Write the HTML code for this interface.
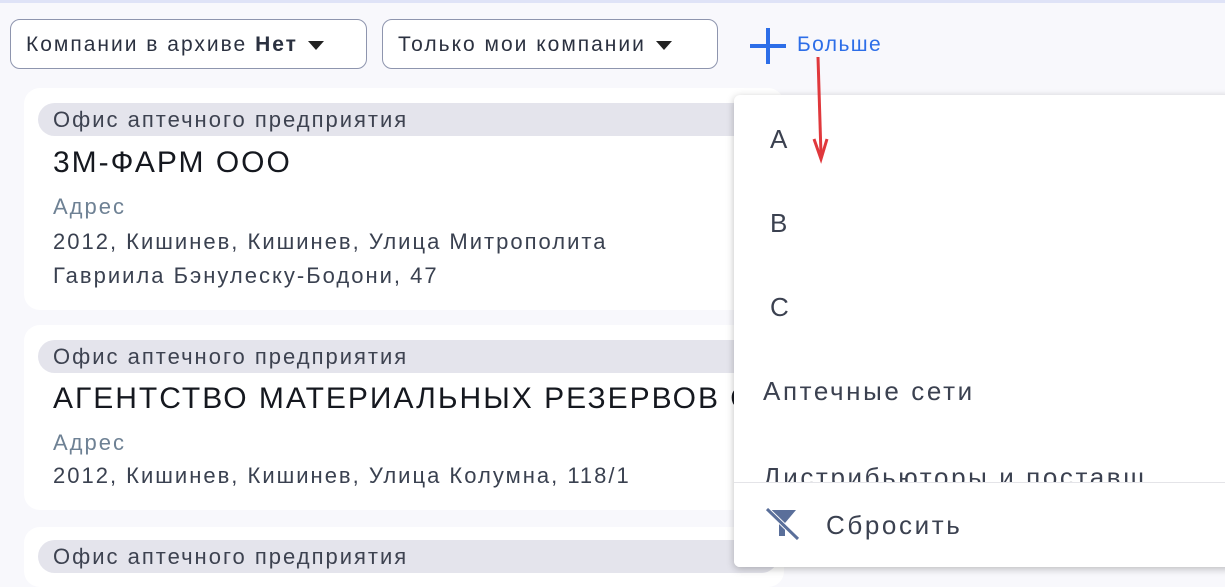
<!DOCTYPE html><html><head><style>
body{margin:0;width:1225px;height:570px;overflow:hidden;background:#f8f8fc;font-family:"Liberation Sans",sans-serif;position:relative;color:#1f2430;letter-spacing:2px}
.top{position:absolute;left:0;top:0;width:1225px;height:3px;background:#dfe3f7}
.btn{position:absolute;top:19px;height:50px;border:1.5px solid #8e95ae;border-radius:10px;background:#fff;font-size:21px;color:#2b3140;line-height:49px;box-sizing:border-box;padding-left:15px;white-space:nowrap}
.tri{display:inline-block;width:0;height:0;border-left:8px solid transparent;border-right:8px solid transparent;border-top:9px solid #222;vertical-align:middle;margin-left:10px}
.card{position:absolute;left:24px;width:760px;background:#fff;border-radius:16px}
.tag{position:absolute;left:14px;width:740px;height:33px;background:#e4e4ec;border-radius:17px;font-size:22px;color:#3d4250;line-height:33px;padding-left:15px;box-sizing:border-box;white-space:nowrap}
.t{position:absolute;left:29px;font-size:30px;color:#15181f;white-space:nowrap}
.a{position:absolute;left:29px;font-size:22px;color:#6e8194}
.d{position:absolute;left:29px;font-size:22px;color:#3a4150;line-height:34px;white-space:nowrap}
.menu{position:absolute;left:734px;top:95px;width:500px;height:472px;background:#fff;border-radius:6px;box-shadow:0 2px 8px rgba(0,0,0,.25);overflow:hidden}
.mi{position:absolute;left:29px;font-size:26px;color:#3b4150;letter-spacing:2.6px;white-space:nowrap}
</style></head><body>
<div class="top"></div>
<div class="btn" style="left:10px;width:357px">Компании в архиве <b>Нет</b><span class="tri"></span></div>
<div class="btn" style="left:382px;width:336px">Только мои компании<span class="tri"></span></div>
<div style="position:absolute;left:750px;top:44px;width:36px;height:4px;background:#2d6ee8"></div>
<div style="position:absolute;left:766px;top:28px;width:4px;height:36px;background:#2d6ee8"></div>
<div style="position:absolute;left:797px;top:33px;font-size:21px;color:#2d6ee8;letter-spacing:1.4px">Больше</div>

<div class="card" style="top:88px;height:222px">
<div class="tag" style="top:15px">Офис аптечного предприятия</div>
<div class="t" style="top:146px;top:58px">3М-ФАРМ ООО</div>
<div class="a" style="top:106px">Адрес</div>
<div class="d" style="top:137px">2012, Кишинев, Кишинев, Улица Митрополита<br>Гавриила Бэнулеску-Бодони, 47</div>
</div>
<div class="card" style="top:325px;height:185px">
<div class="tag" style="top:15px">Офис аптечного предприятия</div>
<div class="t" style="top:57px">АГЕНТСТВО МАТЕРИАЛЬНЫХ РЕЗЕРВОВ ОО</div>
<div class="a" style="top:105px">Адрес</div>
<div class="d" style="top:134px">2012, Кишинев, Кишинев, Улица Колумна, 118/1</div>
</div>
<div class="card" style="top:527px;height:60px">
<div class="tag" style="top:13px">Офис аптечного предприятия</div>
</div>

<div class="menu">
<div class="mi" style="left:36px;top:29px">A</div>
<div class="mi" style="left:36px;top:113px">B</div>
<div class="mi" style="left:36px;top:197px">C</div>
<div class="mi" style="top:281px">Аптечные сети</div>
<div class="mi" style="top:367px">Дистрибьюторы и поставщ...</div>
<div style="position:absolute;left:0;top:387px;width:500px;height:90px;background:#fff;border-top:1px solid #e4e4e8"></div>
<svg style="position:absolute;left:31px;top:413px" width="36" height="32" viewBox="0 0 36 32"><path d="M3 2H31L20 15V28H14V15Z" fill="#5a6f9a"/><line x1="2" y1="1" x2="33" y2="31" stroke="#fff" stroke-width="5"/><line x1="2" y1="1" x2="33" y2="31" stroke="#5a6f9a" stroke-width="3"/></svg>
<div class="mi" style="left:92px;top:415px">Сбросить</div>
</div>
<svg style="position:absolute;left:805px;top:55px" width="30" height="110"><line x1="13" y1="2" x2="16" y2="100" stroke="#e0383c" stroke-width="3"/><path d="M9 84L16 104L22 84" fill="none" stroke="#e0383c" stroke-width="3"/></svg>
</body></html>
